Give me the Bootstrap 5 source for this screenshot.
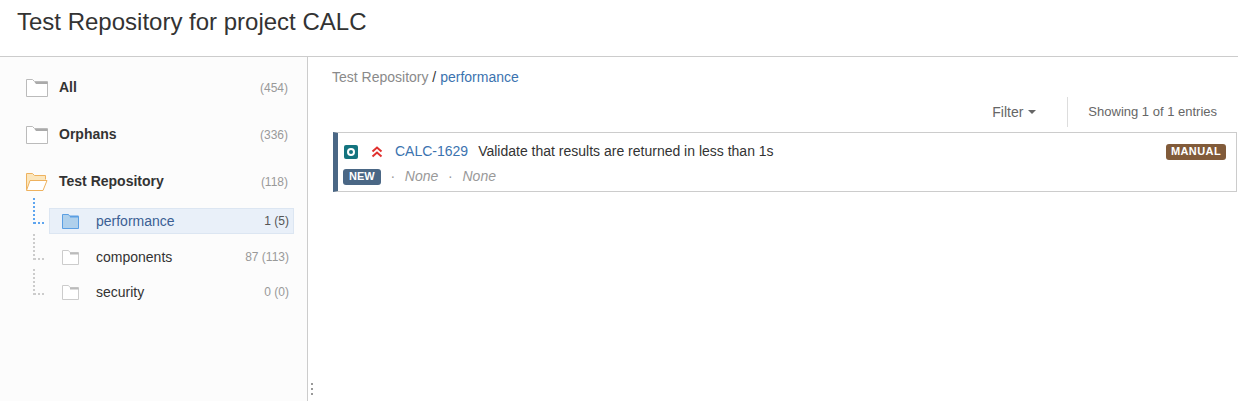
<!DOCTYPE html>
<html lang="en">

<head>
    <meta charset="UTF-8" />
    <title>Test Repository</title>
    <link href="https://cdn.jsdelivr.net/npm/bootstrap@5.3.2/dist/css/bootstrap.min.css" rel="stylesheet">
    <style>
        html, body { height: 100%; }
        body { font-family: "Liberation Sans", Arial, sans-serif; font-size: 14px; color: #333; background: #fff; overflow: hidden; }
        .page-head { height: 57px; padding: 7px 17px 0; border-bottom: 1px solid #ccc; }
        .page-head h1 { font-size: 24px; line-height: 30px; font-weight: 400; margin: 0; color: #333; }
        .repo-body { height: 344px; }
        .tree-side { width: 308px; flex: none; background: #fcfcfc; border-right: 1px solid #ccc; padding: 7px 13px 0 26px; }
        .root-row { height: 47px; }
        .root-row .root-name { font-weight: 700; margin-left: 11px; color: #333; }
        .count { color: #999; font-size: 12px; margin-left: auto; padding-right: 6px; }
        .sub-tree { margin-left: 6px; margin-top: 3px; }
        .sub-row { height: 26px; }
        .sub-row + .sub-row { margin-top: 10px; }
        .sub-row:last-child { margin-top: 9px; }
        .link-dots { flex: none; align-self: flex-start; margin-top: -10px; margin-right: 4px; }
        .sub-item { flex: 1; height: 26px; padding-left: 12px; border: 1px solid transparent; }
        .sub-item.active-node { background: #e9f0f9; border-color: #dce6f2; }
        .sub-item.active-node .sub-name { color: #3b5f94; }
        .sub-item.active-node .count { color: #555; }
        .sub-item .count { padding-right: 4px; }
        .sub-name { margin-left: 17px; }
        .content-pane { flex: 1; min-width: 0; padding: 12px 1px 0 24px; position: relative; }
        .crumbs { line-height: 16px; color: #333; }
        .crumbs .crumb-root { color: #8a8a8a; }
        .crumbs a { color: #3b73af; text-decoration: none; }
        .list-bar { height: 30px; margin-top: 12px; color: #666; font-size: 13px; }
        .filter-toggle { color: #666; font-size: 14px; padding-right: 31px; height: 30px; }
        .filter-toggle::after { content: ""; display: inline-block; margin-left: 5px; vertical-align: 2px; border-left: 4px solid transparent; border-right: 4px solid transparent; border-top: 4px solid #666; }
        .entries { border-left: 1px solid #ddd; height: 30px; padding: 0 20px 0 20px; font-size: 13px; color: #666; }
        .issue-box { margin-top: 5px; margin-left: 1px; height: 60px; border: 1px solid #ccc; border-left: 5px solid #4a6785; padding: 0 10px 0 5px; }
        .issue-top { height: 36px; padding-top: 1px; padding-left: 1px; }
        .type-ico { width: 14px; height: 14px; margin-right: 13px; }
        .prio-ico { width: 12px; height: 12px; margin-right: 12px; }
        .issue-key { color: #3b73af; text-decoration: none; margin-right: 10px; }
        .issue-title { color: #333; }
        .tag-text { font-size: 11px; font-weight: 700; font-style: normal; line-height: 15px; height: 16px; border-radius: 3px; color: #fff; padding: 0 5px; letter-spacing: .4px; }
        .tag-new { background: #4a6785; padding: 0 6px; letter-spacing: 0; }
        .tag-manual { background: #815b3a; margin-left: auto; margin-top: 1px; }
        .issue-sub { color: #999; font-style: italic; margin-top: -3px; }
        .issue-sub .sep { font-style: normal; margin: 0 9.75px; }
        .grip-dots { position: absolute; left: 3px; bottom: 5px; }
    </style>
</head>

<body>
    <div class="page-head">
        <h1>Test Repository for project CALC</h1>
    </div>

    <div class="repo-body d-flex">
        <!-- Folder tree -->
        <div class="tree-side">
            <div class="root-row d-flex align-items-center">
                <svg width="22" height="18" viewBox="0 0 22 18"><path d="M.5 17.5V.5h6l2 2h13v15z" fill="#fff" stroke="#bbb"/><path d="M8.500 3h13v2H10z" fill="#aaa"/></svg>
                <span class="root-name">All</span>
                <span class="count">(454)</span>
            </div>
            <div class="root-row d-flex align-items-center">
                <svg width="22" height="18" viewBox="0 0 22 18"><path d="M.5 17.5V.5h6l2 2h13v15z" fill="#fff" stroke="#bbb"/><path d="M8.500 3h13v2H10z" fill="#aaa"/></svg>
                <span class="root-name">Orphans</span>
                <span class="count">(336)</span>
            </div>
            <div class="root-row d-flex align-items-center">
                <svg width="22" height="18" viewBox="0 0 22 18"><path d="M.5 17V.5h6l2 2h11v4" fill="#fbe6bd" stroke="#eeb25f"/><path d="M.5 17.5l3.500-10h17l-4 10z" fill="#fff" stroke="#eeb25f"/></svg>
                <span class="root-name">Test Repository</span>
                <span class="count">(118)</span>
            </div>

            <div class="sub-tree">
                <div class="sub-row d-flex align-items-center">
                    <svg class="link-dots" width="13" height="26" viewBox="0 0 13 26"><path d="M2 0v26M2 25h11" fill="none" stroke="#5ea5ef" stroke-width="2" stroke-dasharray="2 2"/></svg>
                    <div class="sub-item active-node d-flex align-items-center">
                        <svg width="17" height="15" viewBox="0 0 17 15"><path d="M.5 14.500V.5h6l1.500 2h8.500v12z" fill="#afd0ec" stroke="#5b9fe3"/><path d="M8 2.500h8.500" stroke="#5b9fe3" stroke-width="2"/></svg>
                        <span class="sub-name">performance</span>
                        <span class="count">1 (5)</span>
                    </div>
                </div>
                <div class="sub-row d-flex align-items-center">
                    <svg class="link-dots" width="13" height="26" viewBox="0 0 13 26"><path d="M2 0v26M2 25h11" fill="none" stroke="#ccc" stroke-width="2" stroke-dasharray="2 2"/></svg>
                    <div class="sub-item d-flex align-items-center">
                        <svg width="17" height="15" viewBox="0 0 17 15"><path d="M.5 14.500V.5h6l1.500 2h8.500v12z" fill="#fff" stroke="#ccc"/><path d="M8 3.500h8.500" stroke="#bbb" stroke-width="2"/></svg>
                        <span class="sub-name">components</span>
                        <span class="count">87 (113)</span>
                    </div>
                </div>
                <div class="sub-row d-flex align-items-center">
                    <svg class="link-dots" width="13" height="26" viewBox="0 0 13 26"><path d="M2 0v26M2 25h11" fill="none" stroke="#ccc" stroke-width="2" stroke-dasharray="2 2"/></svg>
                    <div class="sub-item d-flex align-items-center">
                        <svg width="17" height="15" viewBox="0 0 17 15"><path d="M.5 14.500V.5h6l1.500 2h8.500v12z" fill="#fff" stroke="#ccc"/><path d="M8 3.500h8.500" stroke="#bbb" stroke-width="2"/></svg>
                        <span class="sub-name">security</span>
                        <span class="count">0 (0)</span>
                    </div>
                </div>
            </div>
        </div>

        <!-- Issue list -->
        <div class="content-pane">
            <div class="crumbs"><span class="crumb-root">Test Repository</span> / <a href="#">performance</a></div>
            <div class="list-bar d-flex justify-content-end align-items-center">
                <span class="filter-toggle d-flex align-items-center">Filter</span>
                <span class="entries d-flex align-items-center">Showing 1 of 1 entries</span>
            </div>
            <div class="issue-box">
                <div class="issue-top d-flex align-items-center">
                    <svg class="type-ico" viewBox="0 0 14 14"><rect width="14" height="14" rx="2" fill="#14747f"/><circle cx="7" cy="7" r="3" fill="none" stroke="#fff" stroke-width="2"/></svg>
                    <svg class="prio-ico" viewBox="0 0 12 12"><path d="M1.500 5.500L6 1.500l4.500 4M1.500 10.500L6 6.500l4.500 4" fill="none" stroke="#e0312f" stroke-width="2"/></svg>
                    <a class="issue-key" href="#">CALC-1629</a>
                    <span class="issue-title">Validate that results are returned in less than 1s</span>
                    <span class="tag-text tag-manual">MANUAL</span>
                </div>
                <div class="issue-sub d-flex align-items-center">
                    <span class="tag-text tag-new">NEW</span>
                    <span class="sep">·</span><span>None</span>
                    <span class="sep">·</span><span>None</span>
                </div>
            </div>
            <svg class="grip-dots" width="2" height="13" viewBox="0 0 2 13"><path d="M1 0v13" stroke="#999" stroke-width="2" stroke-dasharray="2 3"/></svg>
        </div>
    </div>

    <script src="https://cdn.jsdelivr.net/npm/bootstrap@5.3.2/dist/js/bootstrap.bundle.min.js"></script>
</body>

</html>
